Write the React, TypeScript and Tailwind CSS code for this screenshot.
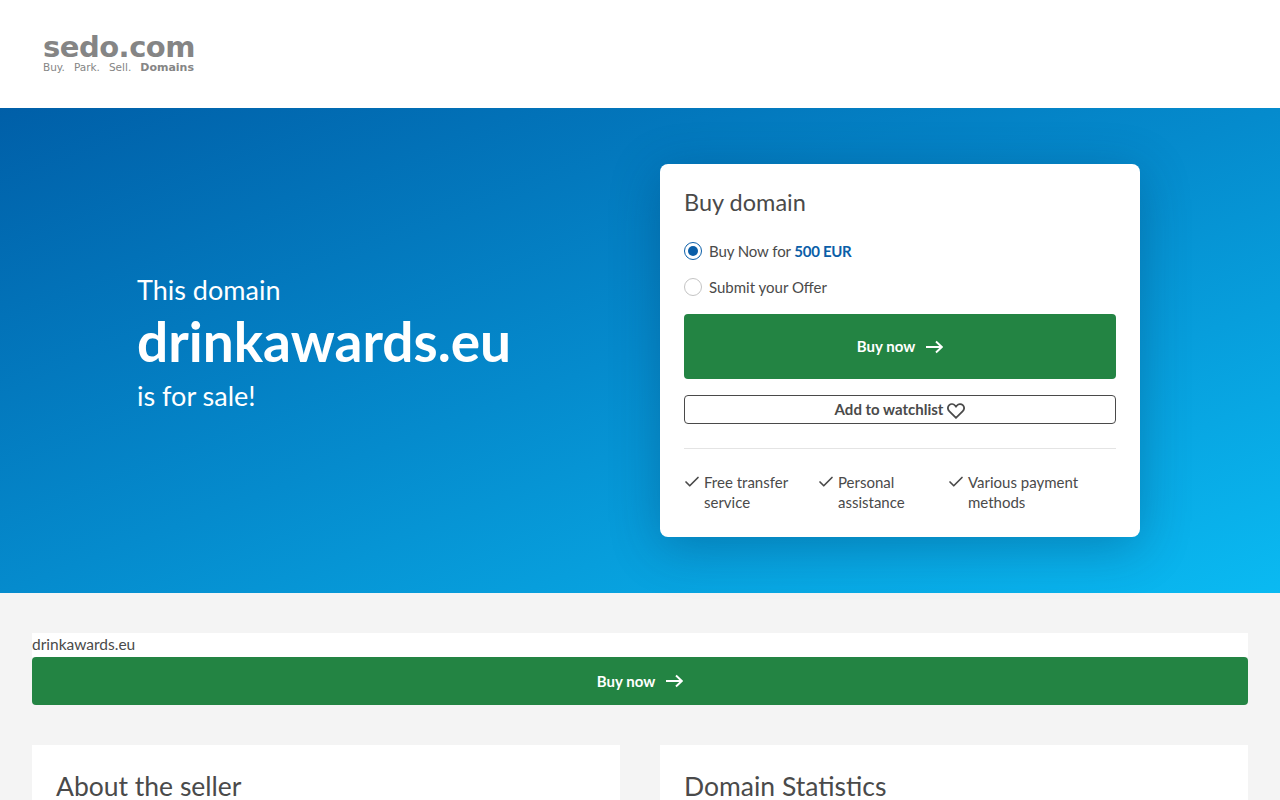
import { Check } from 'lucide-react';

const perks = [
  { label: ['Free transfer', 'service'], width: 'w-[134px]' },
  { label: ['Personal', 'assistance'], width: 'w-[130px]' },
  { label: ['Various payment', 'methods'], width: 'flex-1' },
];

function Arrow() {
  return (
    <svg width="17" height="14" viewBox="0 0 17 14" fill="none" stroke="currentColor" strokeWidth="1.9">
      <path d="M0 7h15.5M10 1.5 15.8 7 10 12.5" />
    </svg>
  );
}

function HeartIcon() {
  return (
    <svg width="18" height="16" viewBox="0 0 18 16" fill="none" stroke="currentColor" strokeWidth="1.8" className="mt-0.5">
      <path d="M9 14.8 2.2 8.2C.4 6.4.5 3.6 2.2 2.1 3.9.6 6.5.8 8 2.5L9 3.6l1-1.1c1.5-1.7 4.1-1.9 5.8-.4 1.7 1.5 1.8 4.3 0 6.1z" />
    </svg>
  );
}

function BuyButton({ tall }: { tall?: boolean }) {
  return (
    <button
      className={`flex w-full items-center justify-center gap-[11px] rounded bg-[#238443] text-[15px] font-bold text-white ${tall ? 'h-[65px]' : 'h-12'}`}
    >
      Buy now
      <Arrow />
    </button>
  );
}

function BuyCard() {
  return (
    <div className="w-[480px] self-start rounded-lg bg-white px-6 pt-6 pb-[25px] text-[#4a4a4a] shadow-[0_10px_50px_rgba(0,40,80,0.3)]">
      <h2 className="text-[23.5px] leading-[28px]">Buy domain</h2>

      <div className="mt-[23px] flex h-6 items-center gap-[7px] text-[15px]">
        <span className="flex h-[18px] w-[18px] items-center justify-center rounded-full border border-[#0a5ea8]">
          <span className="h-2.5 w-2.5 rounded-full bg-[#0a5ea8]" />
        </span>
        <span className="tracking-[-0.1px]">
          Buy Now for <b className="font-bold tracking-[-0.3px] text-[#0a5ea8]">500 EUR</b>
        </span>
      </div>
      <div className="mt-3 flex h-6 items-center gap-[7px] text-[15px]">
        <span className="h-[18px] w-[18px] rounded-full border border-[#c4c4c4]" />
        <span>Submit your Offer</span>
      </div>

      <div className="mt-[15px]">
        <BuyButton tall />
      </div>

      <button className="mt-4 flex h-[29px] w-full items-center justify-center gap-1 rounded border border-[#4a4a4a] text-[15px] font-bold">
        Add to watchlist
        <HeartIcon />
      </button>

      <div className="mt-6 flex border-t border-[#e4e4e4] pt-[23px]">
        {perks.map((perk) => (
          <div key={perk.label[0]} className={`flex gap-0.5 text-[15px] leading-5 ${perk.width}`}>
            <Check className="mt-px -ml-px h-[18px] w-[18px] shrink-0" strokeWidth={2.25} />
            <span className="ml-px">
              {perk.label[0]}
              <br />
              {perk.label[1]}
            </span>
          </div>
        ))}
      </div>
    </div>
  );
}

export default function App() {
  return (
    <div className="h-[800px] overflow-hidden bg-[#f4f4f4] font-['Lato',sans-serif] text-[#4a4a4a]">
      {/* Header */}
      <header className="flex h-[108px] items-center bg-white pl-[43px]">
        <div className="pb-[3px] text-[#858585]">
          <div className="font-['DejaVu_Sans',sans-serif] text-[29px] font-bold leading-[30px] tracking-[-0.5px]">sedo.com</div>
          <div className="flex items-baseline gap-[9px] font-['DejaVu_Sans',sans-serif] text-[10.5px] leading-[10px]">
            <span>Buy.</span>
            <span>Park.</span>
            <span>Sell.</span>
            <b className="text-[11px] font-bold">Domains</b>
          </div>
        </div>
      </header>

      {/* Hero */}
      <section className="flex h-[485px] justify-between bg-[linear-gradient(to_bottom_right,#005fa8,#058bcd_50%,#0abaf2)] pt-14 pl-[137px] pr-[140px]">
        <div className="pt-[108px] text-white">
          <p className="text-[27px] leading-9">This domain</p>
          <h1 className="text-[55px] font-bold leading-[66px]">drinkawards.eu</h1>
          <p className="mt-1 text-[27px] leading-9">is for sale!</p>
        </div>
        <BuyCard />
      </section>

      {/* Details */}
      <main className="px-8 pt-10">
        <div className="bg-white pb-0.5 text-[15.5px] leading-[22px]">drinkawards.eu</div>
        <BuyButton />
        <div className="mt-10 grid grid-cols-2 gap-10">
          <div className="h-40 bg-white p-6">
            <h2 className="text-[26.5px] leading-[34px]">About the seller</h2>
          </div>
          <div className="h-40 bg-white p-6">
            <h2 className="text-[26.5px] leading-[34px]">Domain Statistics</h2>
          </div>
        </div>
      </main>
    </div>
  );
}
